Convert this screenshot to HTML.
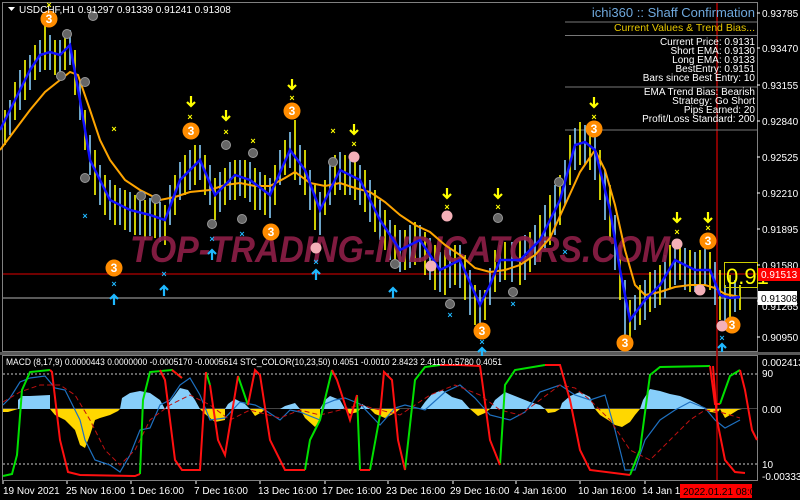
<!DOCTYPE html>
<html><head><meta charset="utf-8"><style>
html,body{margin:0;padding:0;background:#000;width:800px;height:500px;overflow:hidden}
svg{display:block;font-family:"Liberation Sans",sans-serif}
</style></head><body>
<svg width="800" height="500" viewBox="0 0 800 500" xmlns="http://www.w3.org/2000/svg">
<rect width="800" height="500" fill="#000"/>
<rect x="2.5" y="2.5" width="755" height="349" fill="none" stroke="#808080"/>
<rect x="0" y="352" width="800" height="3" fill="#5a5a5a"/>
<rect x="2.5" y="355.5" width="755" height="125" fill="none" stroke="#808080"/>
<line x1="3" y1="274" x2="757" y2="274" stroke="#e00000" stroke-width="1"/>
<line x1="3" y1="298" x2="757" y2="298" stroke="#777" stroke-width="1.5"/>
<line x1="717" y1="3" x2="717" y2="480" stroke="#b00000" stroke-width="1.5"/>
<line x1="565" y1="22" x2="757" y2="22" stroke="#777"/>
<line x1="565" y1="35.5" x2="757" y2="35.5" stroke="#777"/>
<line x1="565" y1="87" x2="757" y2="87" stroke="#777"/>
<line x1="565" y1="130" x2="757" y2="130" stroke="#777"/>
<path stroke="#ffff00" stroke-width="1.6" fill="none" d="M5 110V145M15 82V120M25 60V100M35 45V80M45 20V70M55 40V75M65 35V70M75 50V95M85 110V150M95 150V195M105 175V215M115 185V225M125 190V230M135 195V235M145 200V240M155 200V238M165 205V245M175 175V215M185 155V195M195 145V185M205 155V195M215 178V220M225 168V205M235 160V200M245 160V198M255 168V210M265 175V215M275 165V205M285 140V175M295 120V180M305 150V195M315 185V230M325 180V215M335 155V195M345 155V195M355 162V200M365 170V212M375 190V232M385 210V250M395 225V268M405 230V270M415 222V265M425 232V275M435 245V290M445 250V295M455 245V285M465 255V300M475 285V325M485 290V320M495 250V292M505 242V280M520 240V285M530 232V272M540 215V262M550 195V245M560 175V225M570 135V185M580 122V165M590 125V170M600 150V200M610 185V240M620 245V300M630 300V340M640 285V325M650 272V312M660 265V305M670 245V288M680 240V280M690 250V292M700 250V292M710 252V290M720 270V320M730 275V320M740 285V310"/>
<path stroke="#87cefa" stroke-width="1.6" fill="none" d="M10 100V135M20 70V110M30 55V90M40 40V72M50 35V70M60 40V72M70 30V65M80 80V120M90 135V175M100 165V205M110 180V220M120 188V225M130 192V232M140 195V235M150 198V236M160 202V242M170 185V225M180 162V200M190 150V190M200 145V180M210 165V205M220 172V212M230 162V200M240 160V196M250 162V202M260 172V210M270 178V218M280 150V185M290 132V168M300 145V185M310 170V210M320 192V235M330 165V205M340 152V190M350 160V195M360 165V205M370 180V222M380 200V240M390 220V260M400 230V272M410 225V268M420 225V262M430 238V280M440 252V292M450 248V288M460 245V288M470 270V315M480 290V335M490 268V305M500 245V282M512 242V282M525 235V280M535 225V265M545 205V250M555 185V235M565 160V205M575 128V170M585 125V165M595 135V180M605 170V220M615 215V270M625 280V335M635 295V330M645 280V320M655 270V308M665 255V298M675 242V285M685 248V290M695 252V292M705 248V285M715 262V305M725 285V330M735 280V312"/>
<text x="130" y="262" font-size="37" font-weight="bold" font-style="italic" fill="#8b1d45" fill-opacity="0.92" textLength="540" lengthAdjust="spacingAndGlyphs">TOP-TRADING-INDICATORS.COM</text>
<polyline fill="none" stroke="#ffa500" stroke-width="2" points="0,150 15,130 30,110 45,92 60,80 70,72 78,75 90,110 100,140 110,160 125,180 140,190 160,200 175,197 190,192 210,190 225,185 240,183 255,186 270,186 285,178 295,172 310,183 325,186 340,183 355,188 370,192 385,202 400,215 415,225 430,232 445,245 460,255 475,268 490,272 505,270 520,265 535,255 550,238 565,205 580,172 595,150 605,170 615,205 625,250 635,285 645,295 660,292 675,287 690,285 705,285 715,288 725,294 735,296 740,297"/>
<polyline fill="none" stroke="#1010ff" stroke-width="2.5" points="0,130 10,110 20,90 30,70 40,55 50,52 60,55 70,45 80,100 90,160 100,180 110,200 130,210 150,215 165,220 180,180 200,160 215,195 235,175 250,180 270,195 290,150 305,170 320,210 340,170 360,180 380,220 400,250 420,240 440,270 460,260 480,305 490,285 500,260 520,260 540,240 560,200 575,145 585,142 595,150 610,210 620,270 630,320 645,300 660,285 675,260 695,270 710,270 720,295 730,298 740,297"/>
<g font-size="11" text-anchor="middle" font-weight="bold">
<g fill="#ff8c00"><circle cx="49" cy="19" r="8.5"/><circle cx="191" cy="131" r="8.5"/><circle cx="292" cy="111" r="8.5"/><circle cx="114" cy="268" r="8.5"/><circle cx="271" cy="232" r="8.5"/><circle cx="482" cy="331" r="8.5"/><circle cx="594" cy="129" r="8.5"/><circle cx="625" cy="343" r="8.5"/><circle cx="708" cy="241" r="8.5"/><circle cx="732" cy="325" r="8.5"/></g>
<g fill="#fff" font-size="12"><text x="49" y="23">3</text><text x="191" y="135">3</text><text x="292" y="115">3</text><text x="114" y="272">3</text><text x="271" y="236">3</text><text x="482" y="335">3</text><text x="594" y="133">3</text><text x="625" y="347">3</text><text x="708" y="245">3</text><text x="732" y="329">3</text></g>
<g fill="#f4b0b8"><circle cx="354" cy="157" r="5.5"/><circle cx="447" cy="216" r="5.5"/><circle cx="431" cy="266" r="5.5"/><circle cx="677" cy="244" r="5.5"/><circle cx="700" cy="290" r="5.5"/><circle cx="722" cy="326" r="5.5"/><circle cx="316" cy="248" r="5.5"/></g>
<g fill="#666" stroke="#999"><circle cx="67" cy="34" r="4.5"/><circle cx="61" cy="76" r="4.5"/><circle cx="85" cy="82" r="4.5"/><circle cx="93" cy="16" r="4.5"/><circle cx="141" cy="196" r="4.5"/><circle cx="156" cy="199" r="4.5"/><circle cx="226" cy="145" r="4.5"/><circle cx="253" cy="153" r="4.5"/><circle cx="212" cy="224" r="4.5"/><circle cx="242" cy="219" r="4.5"/><circle cx="333" cy="162" r="4.5"/><circle cx="395" cy="264" r="4.5"/><circle cx="450" cy="304" r="4.5"/><circle cx="513" cy="292" r="4.5"/><circle cx="498" cy="218" r="4.5"/><circle cx="559" cy="182" r="4.5"/><circle cx="85" cy="178" r="4.5"/></g>
</g>
<g font-size="9" font-weight="bold" text-anchor="middle">
<g fill="#ffff00"><text x="114" y="132">×</text><text x="190" y="120">×</text><text x="226" y="135">×</text><text x="253" y="144">×</text><text x="292" y="101">×</text><text x="333" y="134">×</text><text x="354" y="147">×</text><text x="447" y="210">×</text><text x="498" y="210">×</text><text x="594" y="120">×</text><text x="677" y="235">×</text><text x="708" y="231">×</text><text x="49" y="8">×</text></g>
<g fill="#1fb8ff"><text x="85" y="219">×</text><text x="114" y="287">×</text><text x="164" y="277">×</text><text x="212" y="242">×</text><text x="242" y="237">×</text><text x="316" y="265">×</text><text x="450" y="318">×</text><text x="482" y="345">×</text><text x="513" y="307">×</text><text x="565" y="255">×</text><text x="722" y="341">×</text></g>
</g>
<g fill="none" stroke-width="2.2">
<g stroke="#ffff00"><path d="M191 96v10M187 102l4 4 4-4"/><path d="M226 110v10M222 116l4 4 4-4"/><path d="M292 79v10M288 85l4 4 4-4"/><path d="M354 124v10M350 130l4 4 4-4"/><path d="M447 188v10M443 194l4 4 4-4"/><path d="M498 188v10M494 194l4 4 4-4"/><path d="M594 97v10M590 103l4 4 4-4"/><path d="M677 212v10M673 218l4 4 4-4"/><path d="M708 212v10M704 218l4 4 4-4"/></g>
<g stroke="#1fb8ff"><path d="M114 305v-10M110 299l4-4 4 4"/><path d="M164 296v-10M160 290l4-4 4 4"/><path d="M212 260v-10M208 254l4-4 4 4"/><path d="M316 280v-10M312 274l4-4 4 4"/><path d="M393 298v-10M389 292l4-4 4 4"/><path d="M482 356v-8M478 352l4-4 4 4"/><path d="M722 352v-8M718 348l4-4 4 4"/></g>
</g>
<rect x="724.5" y="262.5" width="33" height="25" fill="none" stroke="#cccc00"/>
<text x="726" y="284" font-size="22" fill="#ffff00">0.91</text>
<path d="M8 7h7l-3.5 4z" fill="#fff"/>
<text x="19" y="13" font-size="10" fill="#fff">USDCHF,H1  0.91297 0.91339 0.91241 0.91308</text>
<g text-anchor="end" font-size="10" fill="#fff">
<text x="755" y="17" font-size="13" fill="#6fa8dc">ichi360 :: Shaff Confirmation</text>
<text x="755" y="31" font-size="10.5" fill="#e6c700">Current Values &amp; Trend Bias...</text>
<text x="755" y="45">Current Price: 0.9131</text>
<text x="755" y="54">Short EMA: 0.9130</text>
<text x="755" y="63">Long EMA: 0.9133</text>
<text x="755" y="72">BestEntry: 0.9151</text>
<text x="755" y="81">Bars since Best Entry: 10</text>
<text x="755" y="95">EMA Trend Bias: Bearish</text>
<text x="755" y="104">Strategy:  Go Short</text>
<text x="755" y="113">Pips Earned: 20</text>
<text x="755" y="122">Profit/Loss Standard: 200</text>
</g>
<g font-size="10" fill="#fff">
<g stroke="#fff"><path d="M757 13h3M757 48h3M757 85h3M757 121h3M757 157h3M757 193h3M757 229h3M757 265h3M757 301h3M757 337h3"/></g>
<text x="762" y="17">0.93785</text><text x="762" y="52">0.93470</text><text x="762" y="89">0.93155</text><text x="762" y="125">0.92840</text><text x="762" y="161">0.92525</text><text x="762" y="197">0.92210</text><text x="762" y="233">0.91895</text><text x="762" y="269">0.91580</text><text x="762" y="341">0.90950</text>
<text x="762" y="310">0.91265</text>
<rect x="758" y="268" width="42" height="13" fill="#ff0000"/><text x="761" y="278">0.91513</text>
<rect x="758" y="291" width="39" height="14" fill="#fff"/><text x="761" y="302" fill="#000">0.91308</text>
<text x="762" y="366">0.0024138</text><text x="762" y="377">90</text><text x="762" y="413">0.00</text><text x="762" y="468">10</text><text x="762" y="480">-0.0033389</text>
</g>
<g stroke="#ccc" stroke-dasharray="2 2"><line x1="3" y1="374" x2="757" y2="374"/><line x1="3" y1="464" x2="757" y2="464"/></g>
<line x1="3" y1="408.5" x2="757" y2="408.5" stroke="#444"/>
<polygon fill="#87cefa" points="18,409 18,400 22,396 30,396 50,395 50,409 120,409 122,398 130,393 140,391 150,393 160,400 165,409 168,404 175,395 180,388 188,390 195,400 200,409 225,409 228,404 235,399 245,404 250,409 280,409 285,406 295,403 300,409 320,409 325,400 330,396 340,400 345,409 360,409 362,404 370,409 420,409 425,402 432,394 442,390 452,397 462,400 470,409 490,409 495,400 505,392 515,396 530,402 540,405 545,409 560,409 562,403 570,396 580,392 590,397 595,409 640,409 643,400 650,389 660,391 670,394 680,396 690,400 700,405 705,409"/>
<polygon fill="#ffd700" points="3,409 3,412 8,412 18,409 50,409 55,415 65,420 75,430 80,445 85,448 90,435 95,420 100,418 110,415 118,411 120,409 200,409 205,414 215,422 225,420 225,409 250,409 255,416 262,412 265,409 300,409 305,418 315,427 320,420 320,409 345,409 350,414 358,412 360,409 370,409 375,414 385,418 395,413 400,409 470,409 478,416 485,413 490,409 545,409 548,413 555,412 560,409 595,409 600,415 608,420 615,425 622,427 630,422 635,415 640,409 705,409 710,412 717,413 720,409 725,418 730,415 738,410 742,409"/>
<polyline fill="none" stroke="#1e70c0" stroke-width="1.2" points="3,405 10,398 20,382 30,378 45,376 55,388 65,390 70,400 80,420 85,440 95,460 110,465 120,472 130,455 140,430 150,428 160,405 170,400 180,385 190,378 200,395 210,420 225,418 240,402 255,405 265,410 280,420 290,410 300,412 320,420 325,404 335,400 345,398 360,404 380,425 395,408 405,405 425,410 445,392 460,385 475,398 490,415 510,420 525,412 540,392 560,385 575,395 590,400 605,395 615,430 625,470 635,470 645,440 660,420 675,410 690,402 705,408 715,420 725,428 740,420"/>
<polyline fill="none" stroke="#c01010" stroke-width="1" stroke-dasharray="5 3" points="3,402 20,392 40,385 60,385 75,395 90,420 105,450 120,465 135,450 150,420 170,405 190,395 210,405 230,420 250,410 280,418 300,410 320,415 340,410 360,405 380,410 400,415 430,395 455,385 480,395 500,410 520,415 540,400 560,385 575,388 590,400 610,420 630,450 650,460 670,440 690,420 705,410 720,412 740,418"/>
<path fill="none" stroke="#00e000" stroke-width="2" d="M3 476L12 474L17 455L22 390L30 372L50 370M140 474L143 400L150 372L172 370L182 378M206 372L210 385M238 376L248 405M305 470L310 440L320 420L332 370M357 395L360 470M370 470L380 415M405 470L415 380L425 367L440 365M500 465L505 385L515 370L545 365M630 475L640 450L650 375L660 367L710 366M720 404L730 376L740 370"/>
<path fill="none" stroke="#ff1010" stroke-width="2" d="M50 370L52 372L60 440L68 472L80 475L135 476L140 474M160 370L165 380L170 420L175 460L182 470L200 470L206 372M172 370L182 378M210 385L218 440L225 455L238 376M248 405L255 370L260 375L270 440L285 470L305 470M332 370L337 380L350 420L357 395M360 470L363 470L370 470M380 415L384 372L392 380L398 440L405 470M440 365L460 365L480 366L482 380L490 440L500 465M545 365L560 365L570 400L580 450L590 470L630 475M710 366L715 404L720 404M740 370L745 390L752 430L757 440"/>
<path fill="none" stroke="#ff1010" stroke-width="2" d="M713 366L717 420L725 460L735 472L745 473"/>
<text x="6" y="365" font-size="9.5" fill="#fff" textLength="496" lengthAdjust="spacingAndGlyphs">MACD  (8,17,9) 0.0000443 0.0000000 -0.0005170 -0.0005614   STC_COLOR(10,23,50) 0.4051 -0.0010 2.8423 2.4119 0.5780 0.4051</text>
<g font-size="10" fill="#fff">
<g stroke="#fff"><path d="M3 481v3M67 481v3M131 481v3M196 481v3M260 481v3M325 481v3M388 481v3M453 481v3M516 481v3M580 481v3M645 481v3"/></g>
<text x="3" y="494">19 Nov 2021</text><text x="66" y="494">25 Nov 16:00</text><text x="130" y="494">1 Dec 16:00</text><text x="194" y="494">7 Dec 16:00</text><text x="258" y="494">13 Dec 16:00</text><text x="322" y="494">17 Dec 16:00</text><text x="386" y="494">23 Dec 16:00</text><text x="450" y="494">29 Dec 16:00</text><text x="514" y="494">4 Jan 16:00</text><text x="578" y="494">10 Jan 16:00</text><text x="642" y="494">14 Jan 16:</text>
<rect x="680" y="484" width="72" height="14" fill="#ff0000"/><text x="683" y="495" fill="#000">2022.01.21 08:00</text>
</g>
</svg>
</body></html>
